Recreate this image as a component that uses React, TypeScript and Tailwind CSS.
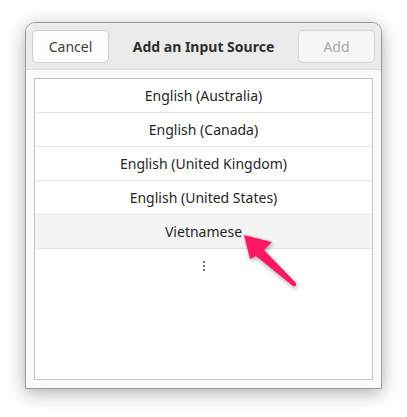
import React from 'react'

const sources = [
  'English (Australia)',
  'English (Canada)',
  'English (United Kingdom)',
  'English (United States)',
  'Vietnamese',
]

export default function App() {
  return (
    <div
      className="relative w-[407px] h-[417px] bg-white pt-[22px] pl-[25px]"
      style={{ fontFamily: '"Noto Sans", "Open Sans", sans-serif' }}
    >
      {/* Dialog window */}
      <div className="w-[357px] h-[367px] flex flex-col rounded-t-[10px] border border-[#9a9a9a] bg-[#fafafa] shadow-[0_4px_18px_rgba(0,0,0,0.32)] overflow-hidden">
        {/* Header bar */}
        <div className="h-[47px] shrink-0 flex items-center justify-between px-[6px] bg-[#ebebeb] border-b border-[#dcdcdc]">
          <button className="w-[77px] h-[33px] rounded-[5px] border border-[#cfcfcf] bg-[#fdfdfd] text-[14px] text-[#3d3d3d]">
            Cancel
          </button>
          <div className="text-[14px] font-bold text-[#2f2f2f]">Add an Input Source</div>
          <button className="w-[77px] h-[33px] rounded-[5px] border border-[#d6d6d6] bg-[#f6f6f6] text-[14px] text-[#a8a8a8]">
            Add
          </button>
        </div>

        {/* List */}
        <div className="flex-1 px-[8px] pt-[8px] pb-[8px]">
          <div className="h-full border border-[#c4c4c4] bg-white flex flex-col">
            {sources.map((s, i) => (
              <div
                key={s}
                className={`h-[34px] shrink-0 flex items-center justify-center border-b border-[#e4e4e4] text-[14px] text-[#262626] ${
                  i === 4 ? 'bg-[#f4f4f4]' : ''
                }`}
              >
                {s}
              </div>
            ))}
            <div className="h-[34px] flex flex-col items-center justify-center gap-[2px]">
              <span className="block w-[2px] h-[2px] bg-[#777]" />
              <span className="block w-[2px] h-[2px] bg-[#777]" />
              <span className="block w-[2px] h-[2px] bg-[#777]" />
            </div>
          </div>
        </div>
      </div>

      {/* Annotation arrow */}
      <svg
        className="absolute left-0 top-0 pointer-events-none"
        width="407"
        height="417"
        style={{ filter: 'drop-shadow(1px 2px 2px rgba(0,0,0,0.35))' }}
      >
        <path
          d="M244 235 L272 242 L264 250 L296 283 Q297 287 293 286 L256 256 L250 259 Z"
          fill="#ff1861"
          strokeLinejoin="round"
        />
      </svg>
    </div>
  )
}
